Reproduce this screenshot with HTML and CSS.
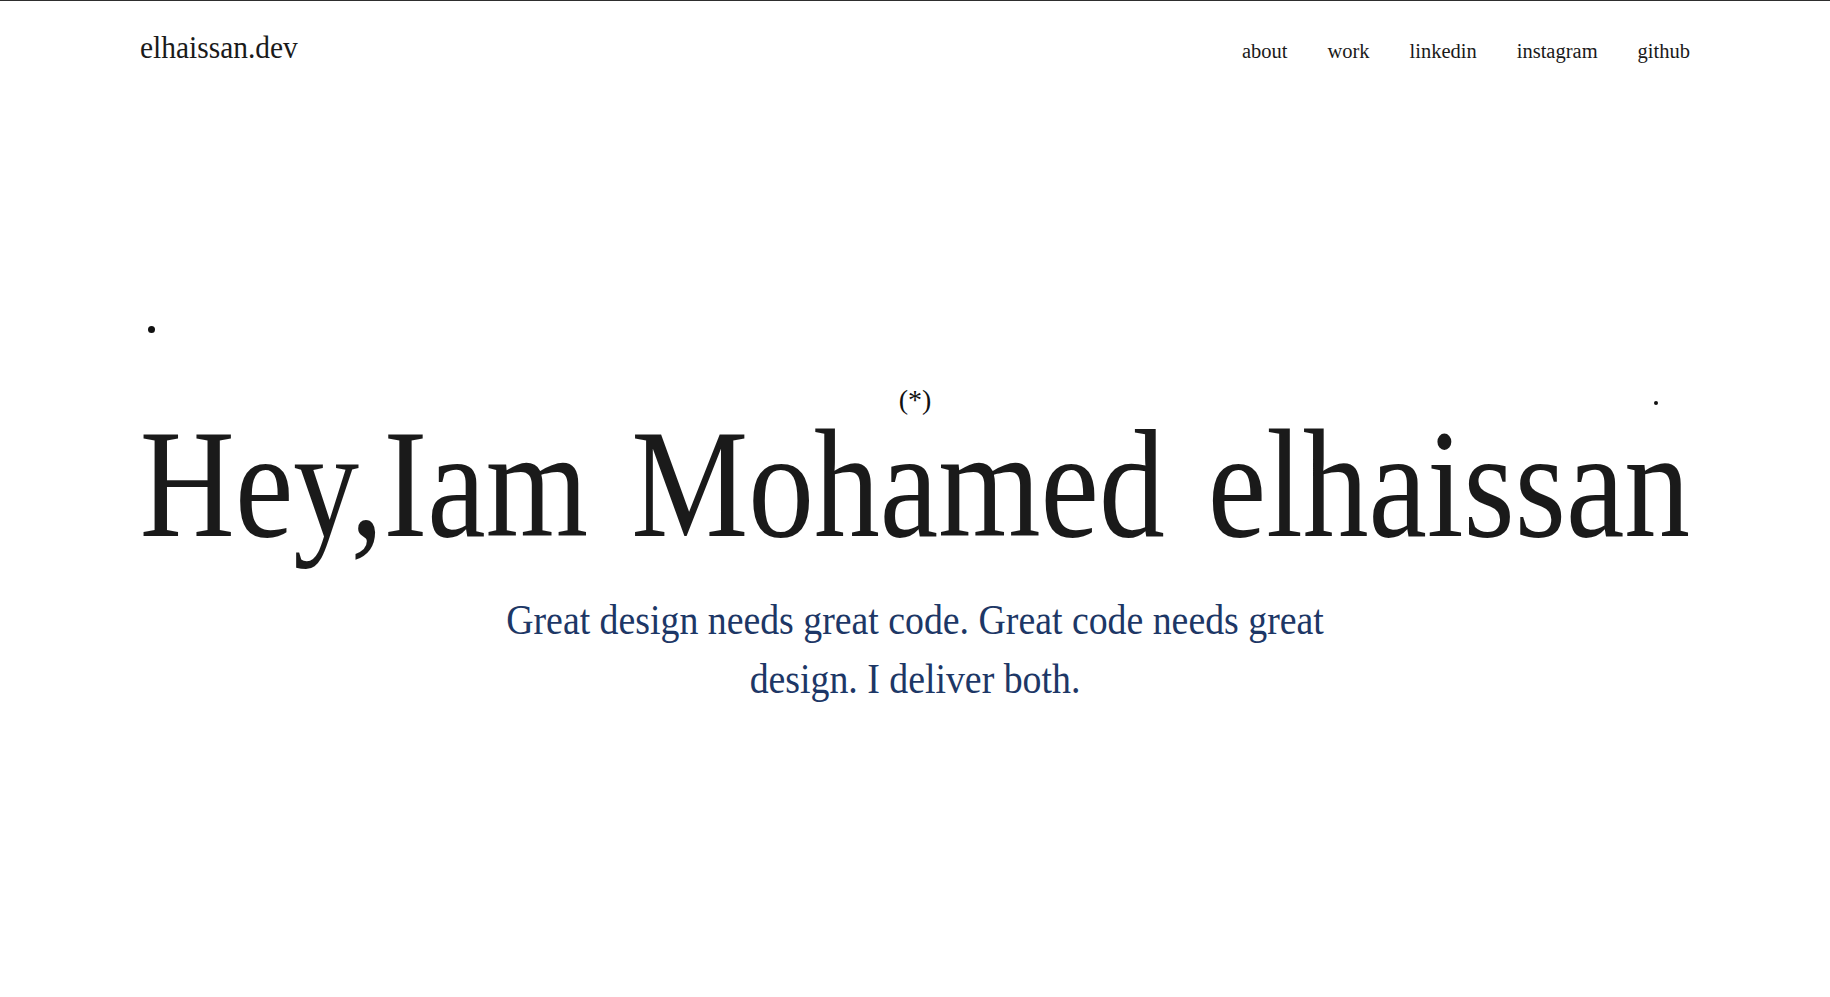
FILE: index.html
```html
<!DOCTYPE html>
<html lang="en">
<head>
<meta charset="utf-8">
<title>elhaissan.dev</title>
<link rel="stylesheet" href="styles.css">
</head>
<body>
<div class="page">
  <header class="topbar">
    <a class="logo" href="#">elhaissan.dev</a>
    <nav class="nav">
      <a href="#">about</a>
      <a href="#">work</a>
      <a href="#">linkedin</a>
      <a href="#">instagram</a>
      <a href="#">github</a>
    </nav>
  </header>
  <main class="hero">
    <div class="mark">(*)</div>
    <div class="title-wrap">
      <h1 class="title">Hey,Iam Mohamed elhaissan</h1>
    </div>
    <div class="sub-wrap">
      <p class="subtitle">Great design needs great code. Great code needs great design. I deliver both.</p>
    </div>
  </main>
  <span class="dot dot-a"></span>
  <span class="dot dot-b"></span>
</div>
</body>
</html>
```
FILE: styles.css
```css
html, body {
  margin: 0;
  padding: 0;
  background: #ffffff;
}
body {
  border-top: 1px solid #2e2e2e;
  overflow-x: hidden;
  font-family: "Liberation Serif", "Times New Roman", serif;
  color: #1a1a1a;
}
.page {
  position: relative;
  min-height: 996px;
}
.topbar {
  display: flex;
  justify-content: space-between;
  align-items: baseline;
  padding: 32px 140px 0 140px;
}
.logo {
  display: inline-block;
  font-size: 31px;
  line-height: 30px;
  color: #1a1a1a;
  text-decoration: none;
  transform: scaleX(0.95);
  transform-origin: left center;
}
.nav {
  display: flex;
  gap: 40px;
  align-items: baseline;
}
.nav a {
  font-size: 20.5px;
  line-height: 24px;
  color: #1a1a1a;
  text-decoration: none;
}
.hero {
  margin-top: 323px;
  padding: 0 140px;
}
.mark {
  text-align: center;
  font-size: 28px;
  line-height: 28px;
  color: #111;
}
.title-wrap {
  display: flex;
  justify-content: center;
  margin-top: 8px;
}
.title {
  flex-shrink: 0;
  margin: 0;
  font-weight: 400;
  font-size: 155px;
  line-height: 124px;
  word-spacing: 12px;
  white-space: nowrap;
  color: #1a1a1a;
  transform: scaleX(0.849);
  transform-origin: center center;
}
.sub-wrap {
  display: flex;
  justify-content: center;
  margin-top: 45px;
}
.subtitle {
  flex-shrink: 0;
  width: 930px;
  margin: 0;
  text-align: center;
  font-size: 42px;
  line-height: 59px;
  color: #1d3766;
  transform: scaleX(0.9);
  transform-origin: center center;
}
.dot {
  position: absolute;
  background: #111;
  border-radius: 50%;
}
.dot-a {
  width: 7px;
  height: 7px;
  left: 148px;
  top: 325px;
}
.dot-b {
  width: 4px;
  height: 4px;
  left: 1654px;
  top: 400px;
}
```
